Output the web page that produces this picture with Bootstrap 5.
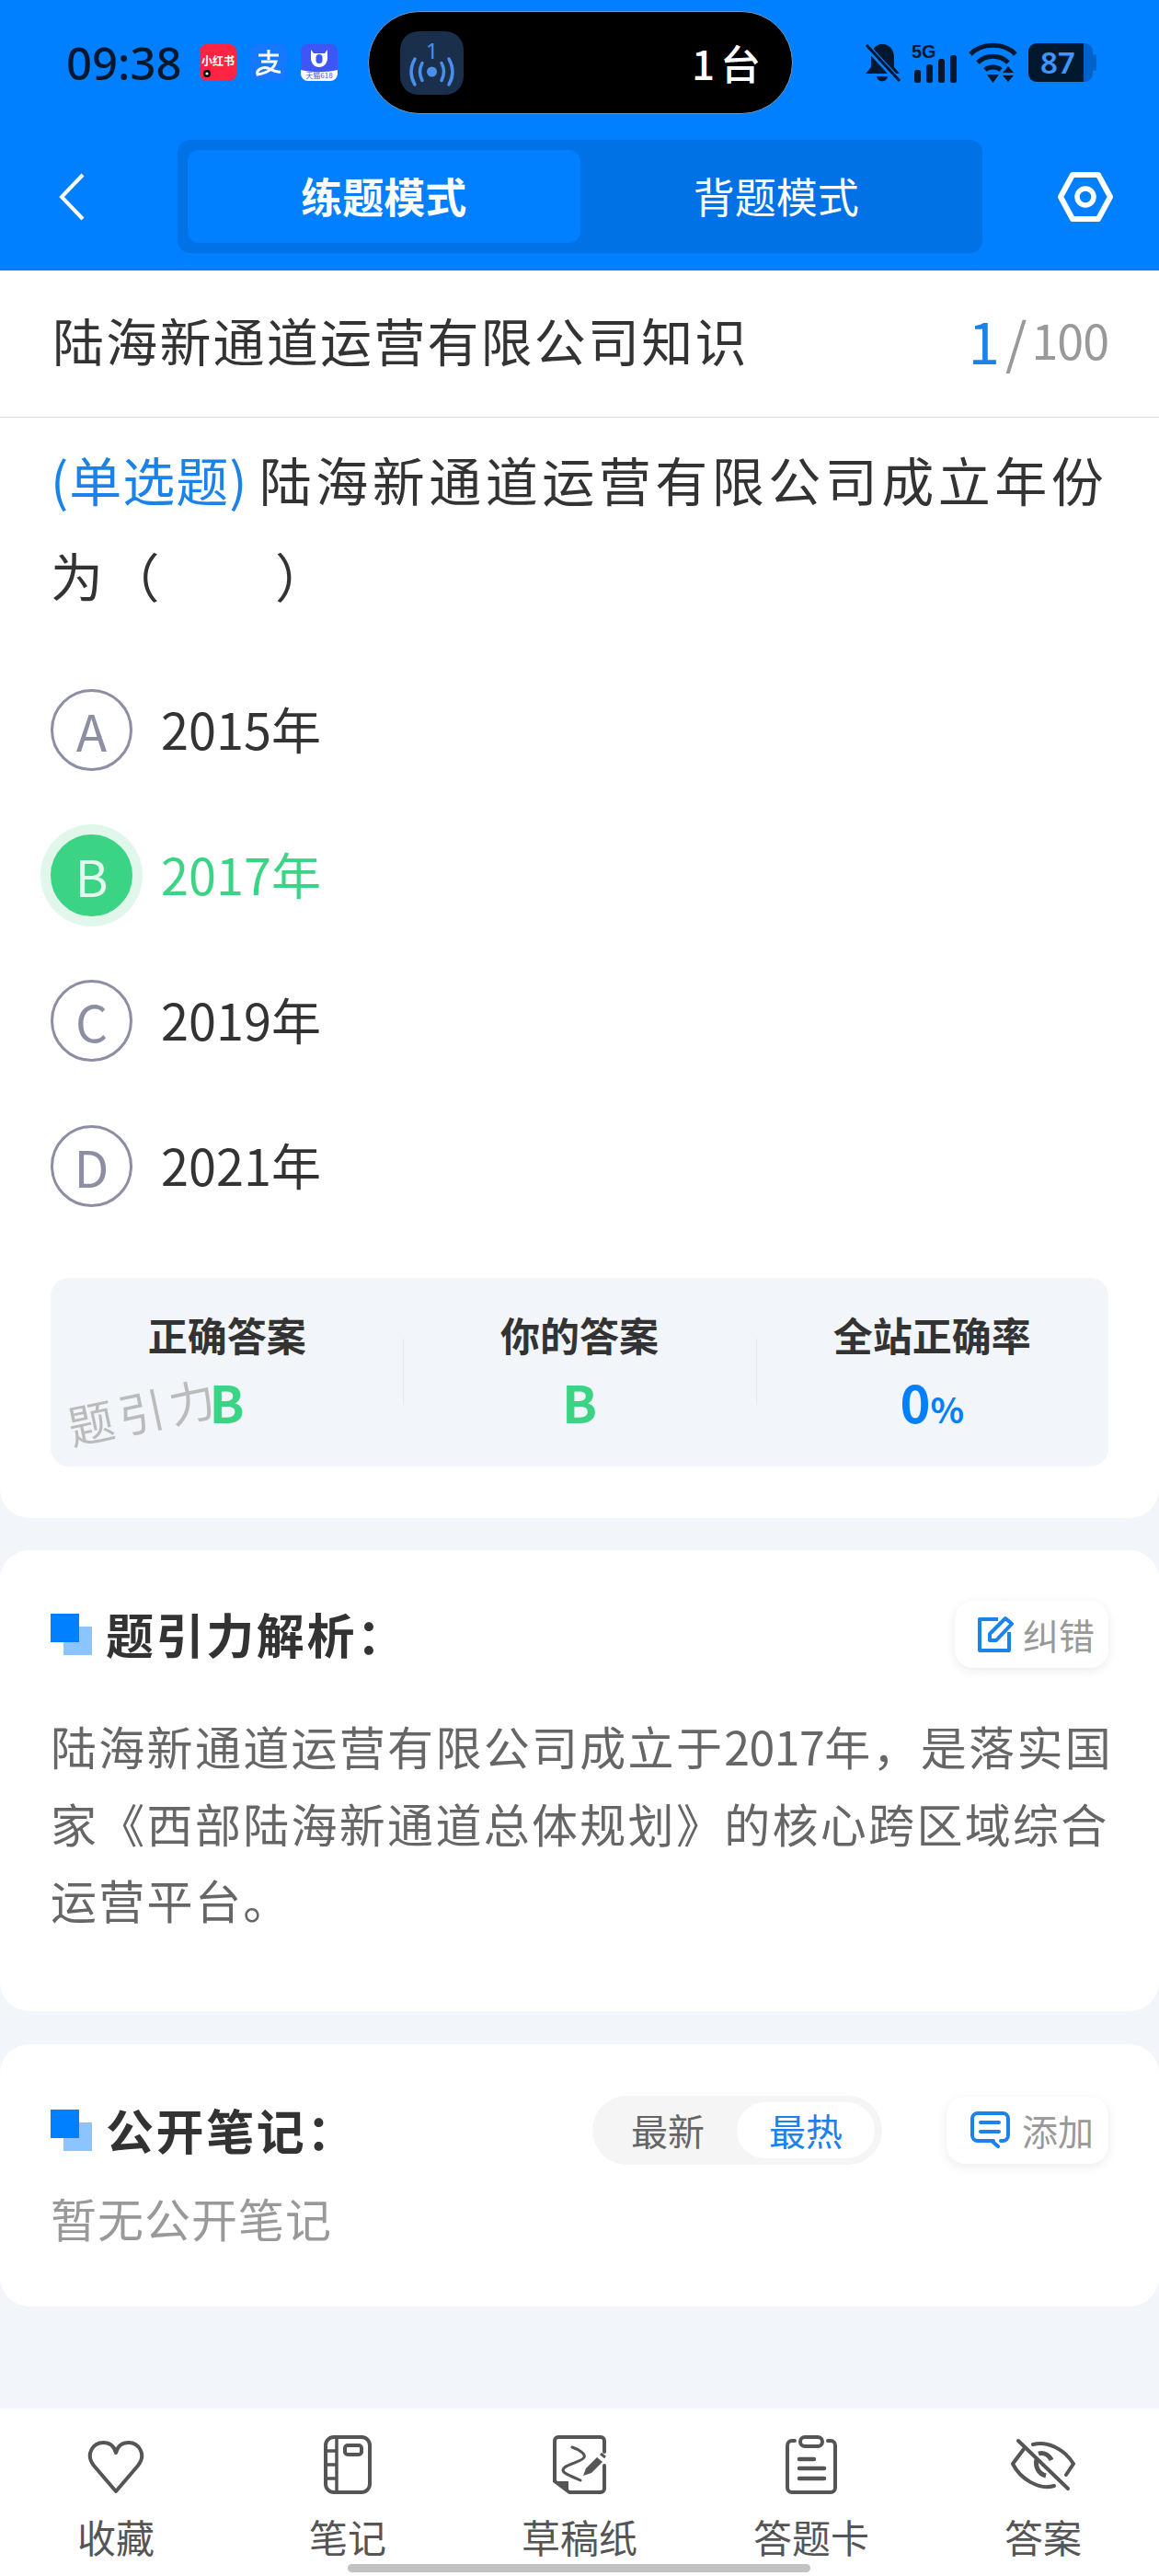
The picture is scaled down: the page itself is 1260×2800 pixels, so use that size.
<!DOCTYPE html>
<html lang="zh-CN">
<head>
<meta charset="utf-8">
<title>练题模式</title>
<link rel="stylesheet" href="https://cdn.jsdelivr.net/npm/bootstrap@5.3.0/dist/css/bootstrap.min.css">
<style>
body{margin:0;background:#f2f6fa;font-family:"Noto Sans CJK SC","Noto Sans",sans-serif;color:#333}
.phone{width:1260px;height:2800px;position:relative;overflow:hidden}
.top-band{height:294px;background:#007fff}
.status-row{height:136px;padding-left:72px;color:#02182f}
.clock{font-size:49px;line-height:1;width:124px;font-family:"Noto Sans",sans-serif;font-weight:500;white-space:nowrap}
.app-tiles{gap:15px;margin-left:21px}
.app-tile{width:40px;height:40px;display:block}
.island{width:462px;height:112px;margin-left:33px;background:#000;border:1px solid #6b9bd0;border-radius:56px;padding:0 34px 0 34px;color:#fff}
.island-text{font-size:44px;line-height:1;font-weight:500;word-spacing:-4px}
.sys-icons{margin-left:78px;gap:12px}
.battery{overflow:visible}
.nav-row{height:123px;margin-top:16px;padding:0 50px 0 64px}
.mode-switch{width:875px;height:123px;margin-left:101px;padding:11px;background:#0072e6;border-radius:14px}
.mode-item{font-size:45px;line-height:1;color:#fff;border-radius:12px;padding-bottom:2px}
.mode-item.on{background:#007fff;font-weight:700}
.title-row{height:160px;padding:0 55px 10px 57px;background:#fff;border-bottom:1px solid #d9d9d9}
.paper-title{font-size:56px;letter-spacing:2.2px;line-height:1}
.counter{color:#999;font-size:52px;line-height:1;letter-spacing:-1px}
.counter b{font-weight:400;color:#1a82e8;font-size:62px}
.counter i{font-style:normal;font-size:60px;margin:0 6px 0 7px}
.question-panel{background:#fff;height:1196px;border-radius:0 0 32px 32px;padding:14px 55px 0}
.stem{font-size:57px;letter-spacing:4.5px;line-height:104px;color:#333;margin:0 -8px 0 0}
.stem span{color:#1a82e8;letter-spacing:1px;margin-right:-5px}
.choices{margin-top:37px}
.choice{height:158px;gap:31px}
.letter{width:89px;height:89px;margin-top:3px;border:3px solid #8c8fa3;border-radius:50%;color:#8c8fa3;font-size:55px;line-height:1;flex:none}
.choice-text{font-size:54px;line-height:1}
.choice.picked .letter{background:#3bd484;border-color:#3bd484;color:#e3f9ee;box-shadow:0 0 0 11px #e2f7ec}
.choice.picked .choice-text{color:#3bd484}
.tally{height:205px;margin-top:44px;background:#f2f6fa;border-radius:20px;position:relative}
.tally-col{height:100%;position:relative;text-align:center;padding-top:38px}
.tally-col+.tally-col::before{content:"";position:absolute;left:0;top:66px;height:72px;width:1px;background:#e6e8eb}
.tally-label{font-size:43px;line-height:46px;font-weight:700;color:#333}
.tally-value{font-size:56px;line-height:58px;font-weight:700;margin-top:21px;color:#3bd484}
.tally-value.rate{color:#007fff}
.tally-value.rate small{font-size:38px}
.stamp{position:absolute;width:auto;left:17px;top:118px;font-size:50px;line-height:1;color:#bbb;letter-spacing:6px;transform:rotate(-12deg);pointer-events:none}
.sheet{background:#fff;border-radius:32px;padding:0 55px}
.sheet-analysis{height:501px;margin-top:35px;padding-top:54px}
.sheet-notes{height:285px;margin-top:36px;padding-top:56px}
.sheet-head{height:74px}
.sq-mark{width:45px;height:45px;position:relative;flex:none;margin-right:15px}
.sq-mark::before{content:"";position:absolute;left:0;top:0;width:31px;height:31px;background:#007fff;z-index:1}
.sq-mark::after{content:"";position:absolute;right:0;bottom:0;width:31px;height:31px;background:#8cc4ff}
.sheet-title{font-size:52px;font-weight:700;line-height:1;letter-spacing:2.6px;color:#333}
.chip{height:73px;background:#fff;border-radius:20px;box-shadow:0 3px 12px rgba(0,0,0,.08);color:#999;font-size:39px;line-height:1;border:0}
.chip-fix{width:167px;padding:0 0 0 25px;gap:9px}
.chip-add{width:176px;margin-left:70px;padding:0 0 0 26px;gap:13px}
.sort-switch{width:315px;height:75px;background:#f5f5f5;border-radius:38px;padding:7px;margin-left:auto}
.sort-item{width:150px;height:61px;border-radius:31px;font-size:40px;line-height:1;color:#666}
.sort-item.on{background:#fff;color:#1a82e8}
.explain{font-size:50px;line-height:83.5px;letter-spacing:2.3px;color:#666;margin:43px -8px 0 0}
.explain span{letter-spacing:-.5px}
.empty-note{font-size:50px;line-height:1;color:#999;margin:33px 0 0;letter-spacing:1px}
.tabbar{position:absolute;left:0;right:0;top:2618px;height:182px;background:#fff}
.tab{text-align:center;padding-top:29px}
.tab svg{display:block;margin:0 auto}
.tab-label{font-size:42px;line-height:1;color:#555;margin-top:25px}
.home-pill{position:absolute;left:378px;top:2787px;width:503px;height:9px;border-radius:5px;background:#c2c2c2}
</style>
</head>
<body>
<div class="phone d-flex flex-column">
  <header class="top-band">
    <div class="status-row d-flex align-items-center">
      <div class="clock">09:38</div>
      <div class="app-tiles d-flex">
        <svg class="app-tile" viewBox="0 0 40 40"><rect width="40" height="40" rx="8" fill="#ff2442"/><text x="20" y="23" font-size="12" font-weight="700" fill="#fff" text-anchor="middle" font-family="Noto Sans CJK SC">小红书</text><circle cx="8" cy="32" r="4" fill="#000"/><circle cx="8" cy="32" r="1.6" fill="#fff"/></svg>
        <svg class="app-tile" viewBox="0 0 40 40"><rect width="40" height="40" rx="8" fill="#1677ff"/><path d="M9 12H31M20 6V17M12 19H28C26 27 20 31 8 33C6 28 14 24 19 26C24 28 28 31 33 30" fill="none" stroke="#fff" stroke-width="3"/></svg>
        <svg class="app-tile" viewBox="0 0 40 40"><path d="M8 0H32A8 8 0 0 1 40 8V32A8 8 0 0 1 32 40H8A8 8 0 0 1 0 32V8A8 8 0 0 1 8 0Z" fill="#3f55f5"/><path d="M0 28C14 31 26 31 40 28V32A8 8 0 0 1 32 40H8A8 8 0 0 1 0 32Z" fill="#fff"/><path d="M11 6L14 10H26L29 6V15C29 21 25 25 20 25C15 25 11 21 11 15Z" fill="#fff"/><rect x="16.500" y="11" width="7" height="10" rx="3.500" fill="#3f55f5"/><text x="20" y="37" font-size="8" fill="#3f55f5" text-anchor="middle" font-family="Noto Sans CJK SC">天猫618</text></svg>
      </div>
      <div class="island d-flex align-items-center justify-content-between">
        <svg width="69" height="69" viewBox="0 0 69 69"><rect width="69" height="69" rx="20" fill="#1a2f4b"/><text x="34.500" y="30" font-size="24" fill="#4a90ea" text-anchor="middle" font-family="Noto Sans">1</text><circle cx="34.500" cy="44" r="5.500" fill="#4a90ea"/><g fill="none" stroke="#4a90ea" stroke-width="3.500" stroke-linecap="round"><path d="M24 34.500Q19 44 24 53.500M45 34.500Q50 44 45 53.500M16 30Q8 44 16 58M53 30Q61 44 53 58"/></g></svg>
        <div class="island-text">1 台</div>
      </div>
      <div class="sys-icons d-flex align-items-center">
        <svg width="39" height="44" viewBox="0 0 39 44"><path d="M19 2C28 2 32 9 32 17V27L38 34H1L7 27V17C7 9 11 2 19 2Z" fill="#02182f"/><path d="M13 37H25C24 44 14 44 13 37Z" fill="#02182f"/><path d="M1 3L37 42" stroke="#007fff" stroke-width="7"/><path d="M2 3L38 42" stroke="#02182f" stroke-width="3"/></svg>
        <svg width="50" height="44" viewBox="0 0 50 44"><text x="0" y="17" font-size="20" font-weight="700" fill="#02182f" font-family="Liberation Sans">5G</text><g fill="#02182f"><rect x="3" y="30" width="7" height="14" rx="2.500"/><rect x="16" y="24" width="7" height="20" rx="2.500"/><rect x="29" y="18" width="7" height="26" rx="2.500"/><rect x="42" y="14" width="7" height="30" rx="2.500"/></g></svg>
        <svg width="53" height="44" viewBox="0 0 53 44"><g fill="none" stroke="#02182f" stroke-width="5"><path d="M2 13C14 0 39 0 51 13"/><path d="M10 22C19 13 34 13 43 22"/><path d="M18 30C22 26 31 26 35 30"/></g><path d="M20 35H33L26.500 44Z" fill="#02182f"/><path d="M43 26L49 33H37Z M37 36H49L43 43Z" fill="#02182f"/></svg>
        <svg class="battery" width="74" height="42" viewBox="0 0 74 42"><rect x="0" y="0" width="70" height="42" rx="9" fill="#0062c8"/><rect x="70" y="12" width="4" height="18" rx="2" fill="#0062c8"/><path d="M9 0H60V42H9A9 9 0 0 1 0 33V9A9 9 0 0 1 9 0Z" fill="#02182f"/><text x="32" y="33" font-size="33" font-weight="600" fill="#3c97ff" text-anchor="middle" font-family="Noto Sans">87</text></svg>
      </div>
    </div>
    <div class="nav-row d-flex align-items-center">
      <svg width="28" height="52" viewBox="0 0 28 52"><path d="M26 2L3 26L26 50" fill="none" stroke="#fff" stroke-width="4"/></svg>
      <div class="mode-switch d-flex">
        <div class="mode-item on flex-fill w-50 d-flex align-items-center justify-content-center">练题模式</div>
        <div class="mode-item flex-fill w-50 d-flex align-items-center justify-content-center">背题模式</div>
      </div>
      <svg class="ms-auto" width="60" height="54" viewBox="0 0 60 54"><path d="M16 3H44L57 27L44 51H16L3 27Z" fill="none" stroke="#fff" stroke-width="6" stroke-linejoin="round"/><circle cx="30" cy="27" r="9" fill="none" stroke="#fff" stroke-width="5.500"/></svg>
    </div>
  </header>

  <div class="title-row d-flex align-items-center justify-content-between">
    <div class="paper-title">陆海新通道运营有限公司知识</div>
    <div class="counter d-flex align-items-center"><b>1</b><i>/</i>100</div>
  </div>

  <section class="question-panel">
    <p class="stem"><span>(单选题)</span> 陆海新通道运营有限公司成立年份为（&nbsp;&nbsp;&nbsp;&nbsp;&nbsp;&nbsp;&nbsp;）</p>
    <div class="choices">
      <div class="choice d-flex align-items-center"><div class="letter d-flex align-items-center justify-content-center">A</div><div class="choice-text">2015年</div></div>
      <div class="choice picked d-flex align-items-center"><div class="letter d-flex align-items-center justify-content-center">B</div><div class="choice-text">2017年</div></div>
      <div class="choice d-flex align-items-center"><div class="letter d-flex align-items-center justify-content-center">C</div><div class="choice-text">2019年</div></div>
      <div class="choice d-flex align-items-center"><div class="letter d-flex align-items-center justify-content-center">D</div><div class="choice-text">2021年</div></div>
    </div>
    <div class="tally row g-0">
      <div class="tally-col col-4"><div class="tally-label">正确答案</div><div class="tally-value">B</div></div>
      <div class="tally-col col-4"><div class="tally-label">你的答案</div><div class="tally-value">B</div></div>
      <div class="tally-col col-4"><div class="tally-label">全站正确率</div><div class="tally-value rate">0<small>%</small></div></div>
      <div class="stamp">题引力</div>
    </div>
  </section>

  <section class="sheet sheet-analysis">
    <div class="sheet-head d-flex align-items-center">
      <span class="sq-mark"></span>
      <span class="sheet-title">题引力解析：</span>
      <button type="button" class="chip chip-fix d-flex align-items-center ms-auto">
        <svg width="40" height="40" viewBox="0 0 40 40"><path d="M22 4H2V38H34V18" fill="none" stroke="#1a82e8" stroke-width="4" stroke-linejoin="round"/><path d="M13 20L30 3L37 9L20 27H13Z" fill="none" stroke="#1a82e8" stroke-width="4" stroke-linejoin="round"/></svg>
        <span>纠错</span>
      </button>
    </div>
    <p class="explain">陆海新通道运营有限公司成立于<span>2017</span>年，是落实国家《西部陆海新通道总体规划》的核心跨区域综合运营平台。</p>
  </section>

  <section class="sheet sheet-notes">
    <div class="sheet-head d-flex align-items-center">
      <span class="sq-mark"></span>
      <span class="sheet-title">公开笔记：</span>
      <div class="sort-switch d-flex">
        <div class="sort-item d-flex align-items-center justify-content-center">最新</div>
        <div class="sort-item on d-flex align-items-center justify-content-center">最热</div>
      </div>
      <button type="button" class="chip chip-add d-flex align-items-center">
        <svg width="43" height="40" viewBox="0 0 43 40"><path d="M25 32H8A6 6 0 0 1 2 26V8A6 6 0 0 1 8 2H35A6 6 0 0 1 41 8V26A6 6 0 0 1 35 32H33M23 32L30 38" fill="none" stroke="#1a82e8" stroke-width="4" stroke-linecap="round"/><path d="M11 12H31M11 22H31" stroke="#1a82e8" stroke-width="4" stroke-linecap="round"/></svg>
        <span>添加</span>
      </button>
    </div>
    <p class="empty-note">暂无公开笔记</p>
  </section>

  <nav class="tabbar row g-0">
    <div class="tab col">
      <svg width="66" height="64" viewBox="0 0 66 64"><path d="M33 61L9 33C-1 20 9 8 19 8C25 8 31 11 33 19C35 11 41 8 47 8C57 8 67 20 57 33Z" fill="none" stroke="#555" stroke-width="4" stroke-linejoin="round"/></svg>
      <div class="tab-label">收藏</div>
    </div>
    <div class="tab col">
      <svg width="52" height="64" viewBox="0 0 52 64"><rect x="2" y="2" width="48" height="60" rx="9" fill="none" stroke="#555" stroke-width="4"/><path d="M14 2V62M2 17H14M2 32H14M2 47H14" fill="none" stroke="#555" stroke-width="3.500"/><rect x="23" y="11" width="18" height="10" rx="3" fill="none" stroke="#555" stroke-width="4"/></svg>
      <div class="tab-label">笔记</div>
    </div>
    <div class="tab col">
      <svg width="58" height="64" viewBox="0 0 58 64"><path d="M2 50V6A4 4 0 0 1 6 2H52A4 4 0 0 1 56 6V18M56 33V58A4 4 0 0 1 52 62H18L2 50" fill="none" stroke="#555" stroke-width="4" stroke-linejoin="round" stroke-linecap="round"/><path d="M2 50H17V62Z" fill="#555"/><path d="M21 13C27 15 36 20 34 24C32 29 11 32 11 38C11 42 22 45 30 49" fill="none" stroke="#555" stroke-width="3" stroke-linecap="round"/><path d="M33 44L36 36L48 24L54 29L42 41Z" fill="#555"/><path d="M52 20L57 24" stroke="#555" stroke-width="3"/></svg>
      <div class="tab-label">草稿纸</div>
    </div>
    <div class="tab col">
      <svg width="56" height="64" viewBox="0 0 56 64"><path d="M10 6H7A5 5 0 0 0 2 11V57A5 5 0 0 0 7 62H49A5 5 0 0 0 54 57V11A5 5 0 0 0 49 6H46" fill="none" stroke="#555" stroke-width="4" stroke-linecap="round"/><rect x="16" y="2" width="24" height="10" rx="5" fill="none" stroke="#555" stroke-width="4"/><path d="M15 26H31M15 36H42M15 47H42" stroke="#555" stroke-width="4.500" stroke-linecap="round"/></svg>
      <div class="tab-label">答题卡</div>
    </div>
    <div class="tab col">
      <svg width="70" height="64" viewBox="0 0 70 64"><path d="M14 15L2 31C10 47 30 60 47 55M24 10C40 6 58 15 68 31L60 43" fill="none" stroke="#555" stroke-width="4" stroke-linecap="round" stroke-linejoin="round"/><path d="M8 6L62 58" stroke="#555" stroke-width="4" stroke-linecap="round"/><path d="M30 20C36 18 42 22 44 27M28 26C26 34 30 42 38 44" fill="none" stroke="#555" stroke-width="5"/></svg>
      <div class="tab-label">答案</div>
    </div>
  </nav>
  <div class="home-pill"></div>
</div>
<script src="https://cdn.jsdelivr.net/npm/bootstrap@5.3.0/dist/js/bootstrap.bundle.min.js"></script>
</body>
</html>
